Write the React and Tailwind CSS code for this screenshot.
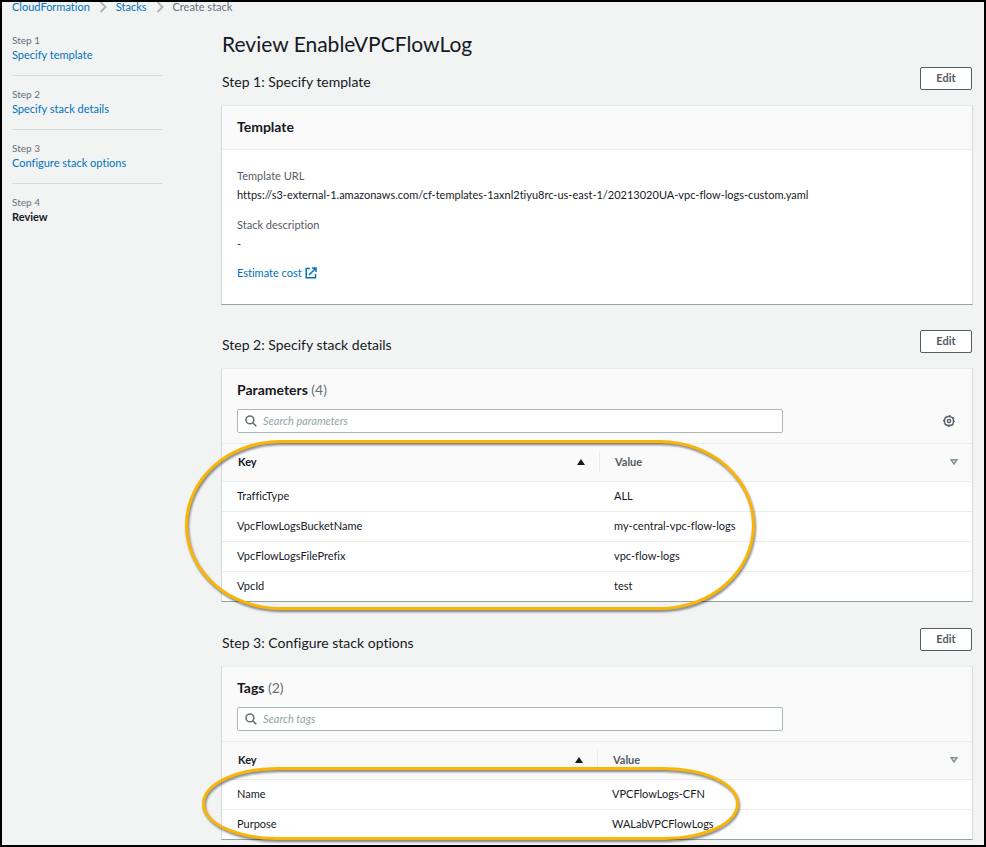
const steps = ['Specify template', 'Specify stack details', 'Configure stack options', 'Review']

const parameters = [
  ['TrafficType', 'ALL'],
  ['VpcFlowLogsBucketName', 'my-central-vpc-flow-logs'],
  ['VpcFlowLogsFilePrefix', 'vpc-flow-logs'],
  ['VpcId', 'test'],
]

const tags = [
  ['Name', 'VPCFlowLogs-CFN'],
  ['Purpose', 'WALabVPCFlowLogs'],
]

function Chevron() {
  return (
    <svg className="h-3 w-2" viewBox="0 0 8 12" fill="none" stroke="#aab7b8" strokeWidth="1.9" aria-hidden="true">
      <path d="M1.5 1 L6.5 6 L1.5 11" />
    </svg>
  )
}

function ExternalIcon() {
  return (
    <svg className="h-3 w-3" viewBox="0 0 12 12" fill="none" stroke="#0073bb" strokeWidth="1.5" aria-hidden="true">
      <path d="M5 1.5 H1.25 V10.75 H10.5 V7" />
      <path d="M7 1 H11 V5 M11 1 L4 8" />
    </svg>
  )
}

function SearchIcon() {
  return (
    <svg className="h-3 w-3 shrink-0" viewBox="0 0 12 12" fill="none" stroke="#687078" strokeWidth="1.6" aria-hidden="true">
      <circle cx="4.9" cy="4.9" r="3.9" />
      <path d="M7.7 7.7 L11.3 11.3" />
    </svg>
  )
}

function GearIcon() {
  return (
    <svg className="h-3 w-3" viewBox="0 0 12 12" fill="none" stroke="#545b64" aria-hidden="true">
      <circle cx="6" cy="6" r="4.6" strokeWidth="1.5" />
      <circle cx="6" cy="6" r="5.5" strokeWidth="1" strokeDasharray="2.16 2.16" strokeDashoffset="1.08" />
      <circle cx="6" cy="6" r="1.6" strokeWidth="1.4" />
    </svg>
  )
}

function SortedIcon() {
  return (
    <svg className="h-[6px] w-2" viewBox="0 0 8 6" aria-hidden="true">
      <path d="M4 0 L8 6 H0 Z" fill="#16191f" />
    </svg>
  )
}

function SortableIcon() {
  return (
    <svg className="h-[6px] w-2" viewBox="0 0 8 6" fill="none" stroke="#879596" strokeWidth="1.6" aria-hidden="true">
      <path d="M1.2 0.8 H6.8 L4 4.9 Z" />
    </svg>
  )
}

function SectionHeader({ title }) {
  return (
    <div className="mb-[15px] flex items-start justify-between">
      <h2 className="mt-[7px] text-sm leading-4">{title}</h2>
      <button type="button" className="h-[23px] w-[52px] rounded-xs border border-[#545b64] bg-white pb-[2px] text-[11px] leading-4 font-bold text-[#545b64]">
        Edit
      </button>
    </div>
  )
}

function Card({ children }) {
  return (
    <div className="-mx-px border border-x-[#d5dbdb] border-t-[#eaeded] border-b-[#95a0a1] bg-white">
      {children}
    </div>
  )
}

function ResourceTable({ id, title, placeholder, settings, rows, keyColumn, headRow, highlight }) {
  return (
    <Card>
      <div className="flex h-[75px] flex-col justify-between border-b border-[#eaeded] bg-[#fafafa] px-[15px] pt-[11px] pb-[10px]">
        <h3 className="text-sm leading-5 font-bold">
          {title} <span className="font-normal text-[#687078]">({rows.length})</span>
        </h3>
        <div className="flex items-center justify-between">
          <label htmlFor={id} className="flex h-6 w-[546px] items-center gap-[6px] rounded-xs border border-[#aab7b8] bg-white px-[7px]">
            <SearchIcon />
            <input
              id={id}
              type="search"
              aria-label={placeholder}
              placeholder={placeholder}
              className="min-w-0 flex-1 bg-transparent text-[11px] leading-4 outline-none placeholder:text-[#95a5a6] placeholder:italic"
            />
          </label>
          {settings && (
            <button type="button" aria-label="Preferences" className="mr-[2px]">
              <GearIcon />
            </button>
          )}
        </div>
      </div>
      <div className="relative">
        <table className="w-full table-fixed border-collapse text-left text-[11px] leading-4">
          <colgroup>
            <col className={keyColumn} />
            <col />
          </colgroup>
          <thead>
            <tr className={headRow}>
              <th className="p-0 font-bold">
                <div className="flex h-5 items-center justify-between border-r border-[#eaeded] pr-[14px] pl-4">
                  Key
                  <SortedIcon />
                </div>
              </th>
              <th className="p-0 font-bold text-[#545b64]">
                <div className="flex items-center justify-between pr-[14px] pl-[15px]">
                  Value
                  <SortableIcon />
                </div>
              </th>
            </tr>
          </thead>
          <tbody>
            {rows.map(([key, value]) => (
              <tr key={key} className="h-[30px] border-b border-[#eaeded] last:border-b-0">
                <td className="px-[15px] py-0">{key}</td>
                <td className="px-[14px] py-0">{value}</td>
              </tr>
            ))}
          </tbody>
        </table>
        <div className={highlight} />
      </div>
    </Card>
  )
}

export default function App() {
  return (
    <div className="min-h-screen overflow-hidden border-2 border-black bg-[#f2f3f3] font-['Lato','Noto_Sans',sans-serif] text-[#16191f] [font-variant-ligatures:none]">
      <nav aria-label="Breadcrumb" className="flex h-[10px] items-center gap-[9px] pl-[10px] text-[11px] leading-[10px]">
        <a href="#cloudformation" className="text-[#0073bb]">CloudFormation</a>
        <Chevron />
        <a href="#stacks" className="text-[#0073bb]">Stacks</a>
        <Chevron />
        <span className="text-[#687078]">Create stack</span>
      </nav>

      <div className="flex gap-[60px] pr-3 pb-1 pl-[10px]">
        <ol className="mt-[21px] w-[150px] shrink-0">
          {steps.map((step, i) => (
            <li key={step} className="mb-[11px] h-[43px] border-b border-[#d5dbdb] last:border-b-0">
              <div className="text-[10px] leading-[14px] text-[#687078]">Step {i + 1}</div>
              {i < steps.length - 1 ? (
                <a href={`#step-${i + 1}`} className="block text-[11px] leading-[15px] text-[#0073bb]">{step}</a>
              ) : (
                <div className="text-[11px] leading-[15px] font-bold">{step}</div>
              )}
            </li>
          ))}
        </ol>

        <main className="min-w-0 flex-1 pt-[18px]">
          <h1 className="mb-[9px] text-[21px] leading-7">Review EnableVPCFlowLog</h1>

          <section className="mb-[25px]">
            <SectionHeader title="Step 1: Specify template" />
            <Card>
              <h3 className="border-b border-[#eaeded] bg-[#fafafa] px-[15px] pt-[11px] pb-3 text-sm leading-5 font-bold">Template</h3>
              <div className="px-[15px] pt-[18px] pb-[23px] text-[11px] leading-4">
                <dl>
                  <dt className="text-[#545b64]">Template URL</dt>
                  <dd className="mt-[3px] mb-[14px]">https://s3-external-1.amazonaws.com/cf-templates-1axnl2tiyu8rc-us-east-1/20213020UA-vpc-flow-logs-custom.yaml</dd>
                  <dt className="text-[#545b64]">Stack description</dt>
                  <dd className="mt-[3px] mb-[13px]">-</dd>
                </dl>
                <a href="#estimate" className="inline-flex items-center gap-[3px] text-[#0073bb]">
                  Estimate cost
                  <ExternalIcon />
                </a>
              </div>
            </Card>
          </section>

          <section className="mb-[26px]">
            <SectionHeader title="Step 2: Specify stack details" />
            <ResourceTable
              id="search-parameters"
              title="Parameters"
              placeholder="Search parameters"
              settings
              rows={parameters}
              keyColumn="w-[378px]"
              headRow="h-[37px] border-b border-[#eaeded] bg-[#fafafa]"
              highlight="pointer-events-none absolute -top-1 -bottom-[9px] -left-[37px] w-[570px] rounded-[96px/86px] border-[3px] border-[#fbb504] drop-shadow-[1px_2px_1px_rgba(0,0,0,0.5)]"
            />
          </section>

          <section>
            <SectionHeader title="Step 3: Configure stack options" />
            <ResourceTable
              id="search-tags"
              title="Tags"
              placeholder="Search tags"
              rows={tags}
              keyColumn="w-[376px]"
              headRow="h-[37px] border-b border-[#eaeded] bg-[#fafafa]"
              highlight="pointer-events-none absolute top-[25px] -bottom-px -left-5 w-[537px] rounded-[75px/36px] border-[3px] border-[#fbb504] drop-shadow-[1px_2px_1px_rgba(0,0,0,0.5)]"
            />
          </section>
        </main>
      </div>
    </div>
  )
}
